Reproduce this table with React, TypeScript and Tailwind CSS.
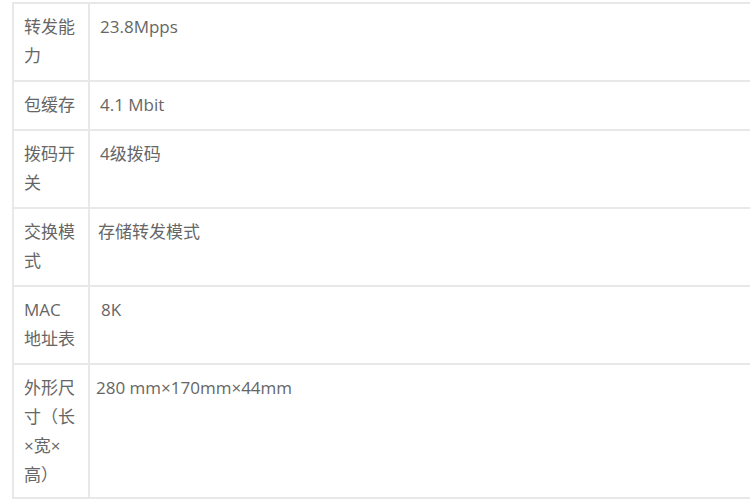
const rows: { label: React.ReactNode; value: string; pad?: string; pb?: string }[] = [
  { label: <>转发能<br />力</>, value: "23.8Mpps" },
  { label: "包缓存", value: "4.1 Mbit" },
  { label: <>拨码开<br />关</>, value: "4级拨码" },
  { label: <>交换模<br />式</>, value: "存储转发模式", pad: "pl-[8px]" },
  { label: <>MAC<br />地址表</>, value: "8K", pad: "pl-[11px]" },
  {
    label: <>外形尺<br />寸（长<br />×宽×<br />高）</>,
    value: "280 mm×170mm×44mm",
    pad: "pl-[6px]",
    pb: "pb-[8px]",
  },
];

export default function App() {
  return (
    <div className="h-[500px] w-[750px] overflow-hidden bg-white font-['Open_Sans','Noto_Sans_CJK_SC',sans-serif] text-[17px] leading-[29px] text-[#666]">
      <div className="ml-[12px] mt-[2px] w-[760px] border-l-2 border-t-2 border-[#e8e8e8]">
        {rows.map((row, i) => (
          <div
            key={i}
            className={`grid grid-cols-[76px_1fr] border-b-2 border-[#e8e8e8] pt-[8px] ${row.pb ?? "pb-[10px]"}`}
          >
            <div className="-mt-[8px] -mb-[10px] border-r-2 border-[#e8e8e8] pt-[8px] pb-[10px] pl-[10px]">
              {row.label}
            </div>
            <div className={row.pad ?? "pl-[10px]"}>{row.value}</div>
          </div>
        ))}
      </div>
    </div>
  );
}
